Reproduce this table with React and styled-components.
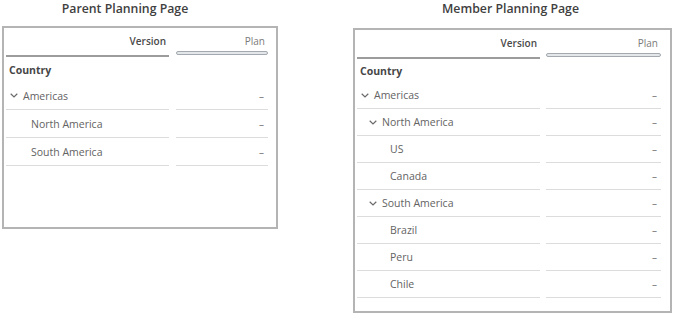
import React from "react";
import styled, { createGlobalStyle } from "styled-components";

const GlobalStyle = createGlobalStyle`
  body {
    margin: 0;
    background: #fff;
    font-family: "Open Sans", "Noto Sans", sans-serif;
  }
`;

const Page = styled.div`
  display: flex;
  align-items: flex-start;
  gap: 75px;
  padding-left: 2px;
  width: 675px;
  height: 314px;
  box-sizing: border-box;
  overflow: hidden;
`;

const Column = styled.div`
  display: flex;
  flex-direction: column;
  flex: none;
  width: ${(p) => p.$width}px;
`;

const Title = styled.h2`
  margin: 0;
  height: ${(p) => p.$height}px;
  padding: 1px ${(p) => p.$shift}px 0 0;
  box-sizing: border-box;
  text-align: center;
  font-size: 12.3px;
  font-weight: 600;
  line-height: 16px;
  color: #404040;
`;

const Panel = styled.div`
  width: 100%;
  height: ${(p) => p.$height}px;
  box-sizing: border-box;
  border: 2px solid #b4b4b4;
  padding: 0 ${(p) => p.$padRight}px 0 2px;
  display: grid;
  grid-template-columns: ${(p) => p.$first}px 1fr;
  column-gap: ${(p) => p.$gap}px;
  align-content: start;
`;

const HeadCell = styled.div`
  height: 29px;
  box-sizing: border-box;
  display: flex;
  flex-direction: column;
  align-items: flex-end;
  padding: 6px 3px 0 0;
  font-size: 10px;
  line-height: 14px;
  color: ${(p) => (p.$strong ? "#4a4a4a" : "#7a7a7a")};
  font-weight: ${(p) => (p.$strong ? 600 : 400)};
  border-bottom: ${(p) => (p.$underline ? "2px solid #9c9c9c" : "none")};
`;

const PlanBar = styled.div`
  align-self: stretch;
  height: 4px;
  margin: 3px -3px 0 0;
  box-sizing: border-box;
  border: 1px solid #a3a9ae;
  border-radius: 2px;
  background: #e3e7ea;
`;

const DimensionLabel = styled.div`
  grid-column: 1 / -1;
  height: ${(p) => p.$height}px;
  display: flex;
  align-items: center;
  padding-left: 3px;
  font-size: 10.5px;
  font-weight: 700;
  color: #474747;
`;

const MemberCell = styled.div`
  height: ${(p) => p.$height}px;
  box-sizing: border-box;
  display: flex;
  align-items: center;
  padding-left: ${(p) => 4 + p.$level * 8}px;
  border-bottom: 1px solid #dcdcdc;
  font-size: 10.5px;
  color: #636363;
`;

const Toggle = styled.span`
  width: 13px;
  flex: none;
  display: flex;
  align-items: center;
`;

const ValueCell = styled.div`
  height: ${(p) => p.$height}px;
  box-sizing: border-box;
  display: flex;
  align-items: center;
  justify-content: flex-end;
  padding-right: 4px;
  border-bottom: 1px solid #dcdcdc;
  font-size: 10px;
  color: #7a7a7a;
`;

const Chevron = () => (
  <svg width="8" height="5" viewBox="0 0 8 5">
    <polyline
      points="0.7,0.8 4,4 7.3,0.8"
      fill="none"
      stroke="#6a6a6a"
      strokeWidth="1.2"
    />
  </svg>
);

const parentRows = [
  { label: "Americas", level: 0, open: true },
  { label: "North America", level: 1 },
  { label: "South America", level: 1 },
];

const memberRows = [
  { label: "Americas", level: 0, open: true },
  { label: "North America", level: 1, open: true },
  { label: "US", level: 2 },
  { label: "Canada", level: 2 },
  { label: "South America", level: 1, open: true },
  { label: "Brazil", level: 2 },
  { label: "Peru", level: 2 },
  { label: "Chile", level: 2 },
];

const PlanningTable = ({ rows, rowHeight, labelHeight, height, first, gap, padRight }) => (
  <Panel $height={height} $first={first} $gap={gap} $padRight={padRight}>
    <HeadCell $strong $underline>
      Version
    </HeadCell>
    <HeadCell>
      Plan
      <PlanBar />
    </HeadCell>
    <DimensionLabel $height={labelHeight}>Country</DimensionLabel>
    {rows.map((row) => (
      <React.Fragment key={row.label}>
        <MemberCell $height={rowHeight} $level={row.level}>
          <Toggle>{row.open && <Chevron />}</Toggle>
          {row.label}
        </MemberCell>
        <ValueCell $height={rowHeight}>–</ValueCell>
      </React.Fragment>
    ))}
  </Panel>
);

const App = () => (
  <>
    <GlobalStyle />
    <Page>
      <Column $width={276}>
        <Title $height={26} $shift={30}>
          Parent Planning Page
        </Title>
        <PlanningTable
          rows={parentRows}
          rowHeight={28}
          labelHeight={25}
          height={203}
          first={163}
          gap={7}
          padRight={8}
        />
      </Column>
      <Column $width={319}>
        <Title $height={28} $shift={4}>
          Member Planning Page
        </Title>
        <PlanningTable
          rows={memberRows}
          rowHeight={27}
          labelHeight={23}
          height={285}
          first={183}
          gap={6}
          padRight={9}
        />
      </Column>
    </Page>
  </>
);

export default App;
